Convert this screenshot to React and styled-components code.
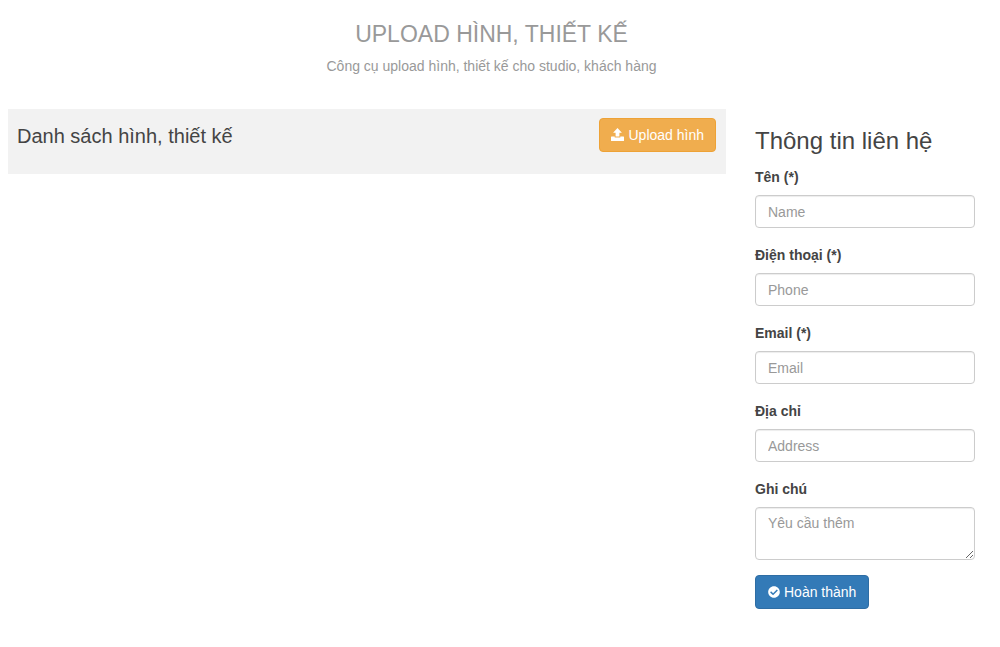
import React, { useState } from "react";
import styled, { createGlobalStyle } from "styled-components";
import { FaCheckCircle } from "react-icons/fa";

const GlobalStyle = createGlobalStyle`
  *, *::before, *::after {
    box-sizing: border-box;
  }
  body {
    margin: 0;
    background: #fff;
    color: #444;
    font-family: "Liberation Sans", Arial, sans-serif;
    font-size: 14px;
    line-height: 20px;
  }
`;

const Page = styled.div`
  padding: 20px 25px 38px 8px;
`;

const Header = styled.header`
  margin-bottom: 33px;
  text-align: center;
  color: #999;
`;

const Title = styled.h1`
  margin: 0 0 8px;
  font-size: 23px;
  font-weight: 400;
  line-height: 28px;
  text-transform: uppercase;
`;

const Subtitle = styled.p`
  margin: 0;
`;

const Columns = styled.div`
  display: grid;
  grid-template-columns: minmax(0, 1fr) 220px;
  gap: 29px;
  align-items: start;
  @media only screen and (max-width: 600px) {
    grid-template-columns: 1fr;
  }
`;

const ListBar = styled.section`
  display: flex;
  justify-content: space-between;
  align-items: flex-start;
  min-height: 65px;
  padding: 9px 10px 9px 9px;
  background: #f2f2f2;
`;

const ListTitle = styled.h2`
  margin: 0;
  padding-top: 6px;
  font-size: 20px;
  font-weight: 400;
  line-height: 24px;
`;

const Button = styled.button`
  display: inline-flex;
  align-items: center;
  gap: 4px;
  height: 34px;
  padding: 0 ${(props) => (props.$primary ? "12px" : "11px")};
  border: 1px solid ${(props) => (props.$primary ? "#2e6da4" : "#eea236")};
  border-radius: 4px;
  background: ${(props) => (props.$primary ? "#337ab7" : "#f0ad4e")};
  color: #fff;
  font: inherit;
  cursor: pointer;
  &:hover {
    opacity: 0.9;
  }
`;

const ContactTitle = styled.h2`
  margin: 0 0 12px;
  padding-top: 18px;
  font-size: 24px;
  font-weight: 400;
  line-height: 28px;
`;

const Field = styled.div`
  margin-bottom: 17px;
`;

const NoteField = styled(Field)`
  margin-bottom: 15px;
`;

const Label = styled.label`
  display: block;
  margin-bottom: 8px;
  font-weight: 700;
`;

const Input = styled.input`
  display: block;
  width: 100%;
  height: 33px;
  padding: 5px 12px;
  border: 1px solid #ccc;
  border-radius: 4px;
  background: #fff;
  box-shadow: inset 0 1px 1px rgba(0, 0, 0, 0.075);
  color: #555;
  font: inherit;
  &::placeholder {
    color: #999;
    opacity: 1;
  }
`;

const Textarea = styled(Input)`
  height: 53px;
  resize: vertical;
`;

const UploadIcon = () => (
  <svg width="13" height="14" viewBox="0 0 13 14" fill="currentColor" aria-hidden="true">
    <path d="M6.5 0 L10.9 4.8 H8.4 V8.6 H4.6 V4.8 H2.1 Z" />
    <path d="M0.5 8.6 H3.7 V9.6 H9.3 V8.6 H12.5 Q13 8.6 13 9.1 V12.5 Q13 13 12.5 13 H0.5 Q0 13 0 12.5 V9.1 Q0 8.6 0.5 8.6 Z" />
  </svg>
);

const fields = [
  { name: "name", type: "text", label: "Tên (*)", placeholder: "Name" },
  { name: "phone", type: "tel", label: "Điện thoại (*)", placeholder: "Phone" },
  { name: "email", type: "email", label: "Email (*)", placeholder: "Email" },
  { name: "address", type: "text", label: "Địa chỉ", placeholder: "Address" },
];

const ContactForm = () => {
  const [contact, setContact] = useState({
    name: "",
    phone: "",
    email: "",
    address: "",
    note: "",
  });

  const handleChange = (e) => {
    setContact({ ...contact, [e.target.name]: e.target.value });
  };

  return (
    <form onSubmit={(e) => e.preventDefault()}>
      <ContactTitle>Thông tin liên hệ</ContactTitle>
      {fields.map((field) => (
        <Field key={field.name}>
          <Label htmlFor={field.name}>{field.label}</Label>
          <Input
            id={field.name}
            type={field.type}
            name={field.name}
            placeholder={field.placeholder}
            value={contact[field.name]}
            onChange={handleChange}
          />
        </Field>
      ))}
      <NoteField>
        <Label htmlFor="note">Ghi chú</Label>
        <Textarea
          as="textarea"
          id="note"
          name="note"
          placeholder="Yêu cầu thêm"
          value={contact.note}
          onChange={handleChange}
        />
      </NoteField>
      <Button type="submit" $primary>
        <FaCheckCircle size={12} aria-hidden="true" />
        Hoàn thành
      </Button>
    </form>
  );
};

const App = () => (
  <>
    <GlobalStyle />
    <Page>
      <Header>
        <Title>Upload hình, thiết kế</Title>
        <Subtitle>Công cụ upload hình, thiết kế cho studio, khách hàng</Subtitle>
      </Header>
      <Columns>
        <ListBar>
          <ListTitle>Danh sách hình, thiết kế</ListTitle>
          <Button type="button">
            <UploadIcon />
            Upload hình
          </Button>
        </ListBar>
        <ContactForm />
      </Columns>
    </Page>
  </>
);

export default App;
